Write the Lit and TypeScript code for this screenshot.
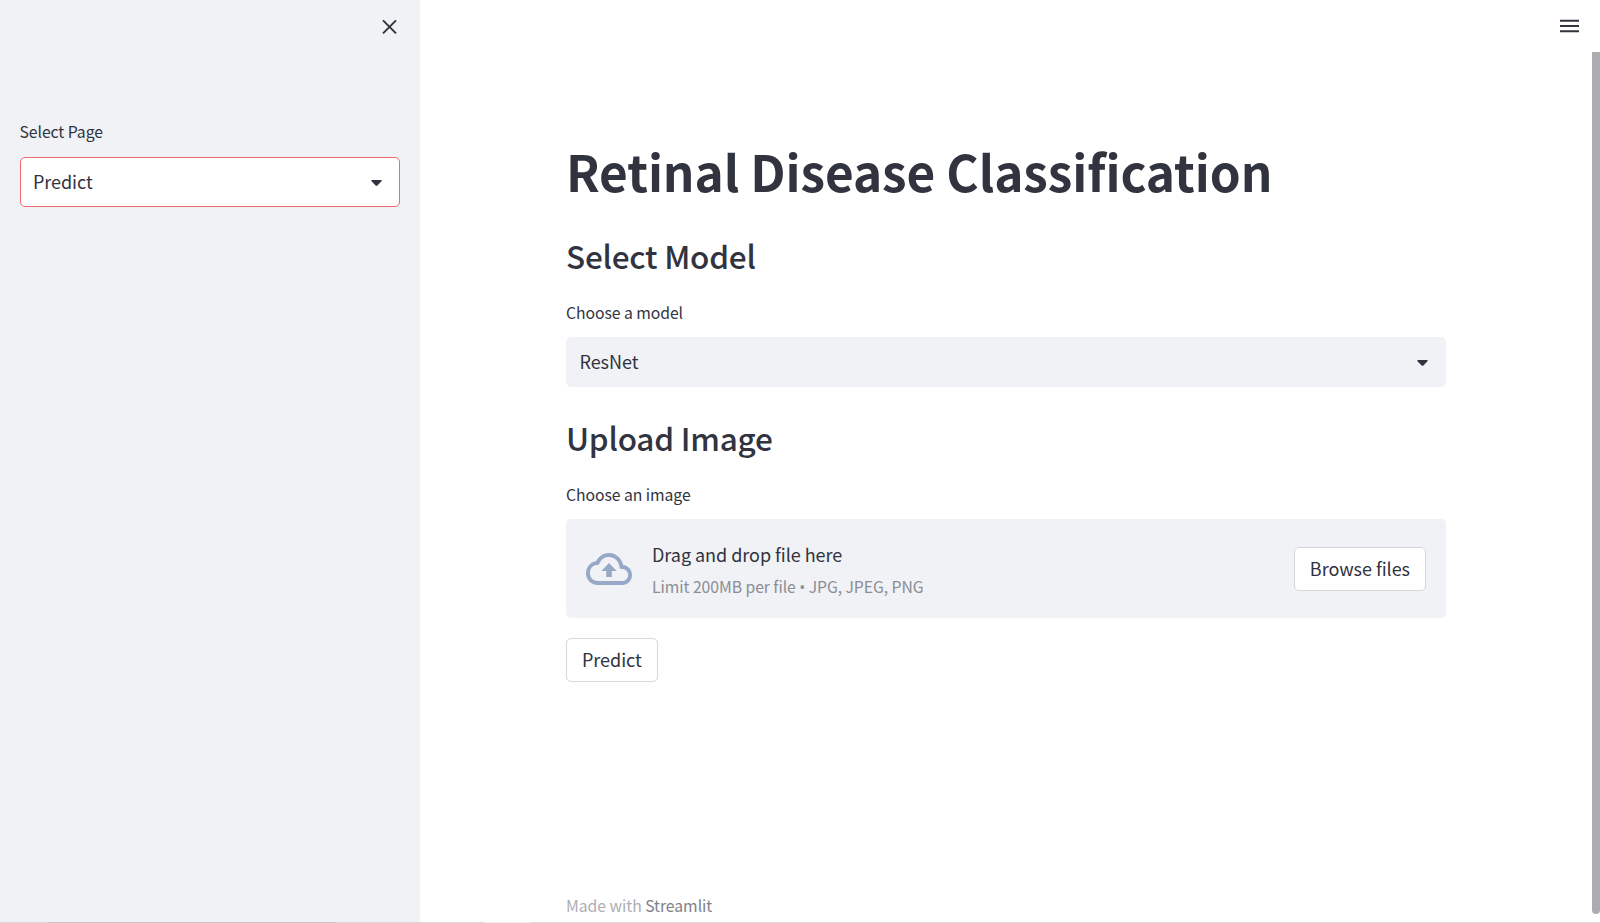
import { LitElement, html, css, svg } from "lit";
import { customElement, property } from "lit/decorators.js";

const caret = svg`<path d="M0.3 0.9 Q0 0 1.2 0 H9.8 Q11 0 10.7 0.9 L6.4 5.4 Q5.5 6.3 4.6 5.4 Z" fill="#31333f"/>`;

@customElement("select-box")
class SelectBox extends LitElement {
  @property() label = "";
  @property() value = "";
  @property({ type: Boolean, reflect: true }) focused = false;

  static styles = css`
    :host { display: block; }
    .label { font-size: 15.75px; line-height: 24px; height: 36px; white-space: nowrap; letter-spacing: -0.06px; }
    :host([focused]) .label { height: 37px; }
    .box {
      box-sizing: border-box; height: 50px; display: flex; align-items: center;
      justify-content: space-between; padding: 0 17px 0 12.5px; border-radius: 5px;
      border: 1px solid #f0f2f6; background: #f0f2f6; font-size: 18px; line-height: 28px;
    }
    :host([focused]) .box { background: #fff; border-color: #ee6a6e; }
    .value { padding-bottom: 2px; letter-spacing: -0.05px; }
    svg { display: block; margin-top: 1px; }
  `;

  render() {
    return html`
      <div class="label">${this.label}</div>
      <div class="box">
        <span class="value">${this.value}</span>
        <svg width="11" height="6" viewBox="0 0 11 6">${caret}</svg>
      </div>`;
  }
}

@customElement("app-root")
class AppRoot extends LitElement {
  static styles = css`
    :host {
      display: flex; flex-direction: column; height: 923px; overflow: hidden; background: #fff; color: #31333f;
      font-family: "Noto Sans CJK SC", "Noto Sans CJK JP", "Noto Sans", sans-serif;
    }
    svg { display: block; }
    .app { display: flex; flex: 1; min-height: 0; }
    .sidebar { box-sizing: border-box; width: 420px; background: #f0f2f6; padding: 0 20px 0 19.5px; }
    .close { height: 120px; box-sizing: border-box; padding: 19px 3px 0 0; display: flex; justify-content: flex-end; }
    .main { flex: 1; display: flex; justify-content: flex-end; }
    .column { width: 880px; margin-right: 94px; display: flex; flex-direction: column; padding-top: 138px; box-sizing: border-box; }
    h1 { margin: 0; font-size: 49.5px; line-height: 66px; font-weight: 700; white-space: nowrap; letter-spacing: -0.09px; }
    h2 { margin: 0; font-size: 31.5px; line-height: 44px; font-weight: 500; white-space: nowrap; letter-spacing: -0.22px; }
    .h-model { margin-top: 29px; margin-bottom: 24px; }
    .h-upload { margin-top: 28px; margin-bottom: 24px; }
    .label { font-size: 15.75px; line-height: 24px; height: 36px; letter-spacing: -0.06px; }
    .drop {
      box-sizing: border-box; height: 99px; border-radius: 5px; background: #f0f2f6; padding: 0 20px;
      display: flex; align-items: center;
    }
    .hint { flex: 1; padding: 1px 0 0 20px; }
    .hint-main { font-size: 18px; line-height: 29px; letter-spacing: -0.04px; }
    .hint-sub { font-size: 15.75px; line-height: 24px; color: #8b8d95; padding-top: 6px; letter-spacing: -0.06px; }
    .dot { font-family: "Open Sans", sans-serif; font-size: 16px; line-height: 1; }
    .button {
      box-sizing: border-box; height: 44px; padding: 0 15px 2px; border: 1px solid #d6d7db; border-radius: 5px;
      background: #fff; color: inherit; font: inherit; font-size: 18px; line-height: 28px; white-space: nowrap;
      letter-spacing: -0.04px;
    }
    .predict { align-self: flex-start; margin-top: 20px; }
    footer { margin-top: 212px; font-size: 15.75px; line-height: 24px; color: #adaeb3; letter-spacing: -0.05px; }
    .brand { color: #7f8188; }
    .rail { width: 94px; margin-left: -94px; display: flex; flex-direction: column; align-items: flex-end; }
    .menu { box-sizing: border-box; height: 52px; padding: 19px 21px 0 0; }
    .thumb { width: 8px; height: 862px; background: #adadb1; border-radius: 0 0 4px 4px; }
    .edge { height: 1px; display: flex; background: #d9d9db; }
    .edge-a { width: 48px; }
    .edge-b { width: 288px; background: #c4c5c8; }
    .edge-c { width: 149px; }
    .edge-d { width: 45px; background: #ededee; }
    .column { margin-right: 154px; }
  `;

  render() {
    return html`
      <div class="app">
        <aside class="sidebar">
          <div class="close">
            <svg width="15" height="16" viewBox="0 0 15 16" fill="none" stroke="#31333f" stroke-width="2">
              <path d="M1 1.4 L14 14.4 M14 1.4 L1 14.4" />
            </svg>
          </div>
          <select-box label="Select Page" value="Predict" focused></select-box>
        </aside>
        <main class="main">
          <div class="column">
            <h1>Retinal Disease Classification</h1>
            <h2 class="h-model">Select Model</h2>
            <select-box label="Choose a model" value="ResNet"></select-box>
            <h2 class="h-upload">Upload Image</h2>
            <div class="label">Choose an image</div>
            <div class="drop">
              <svg width="46" height="32" viewBox="0 4 24 16" preserveAspectRatio="none" fill="#98a8c9">
                <path d="M19.35 10.04A7.49 7.49 0 0 0 12 4C9.11 4 6.6 5.64 5.35 8.04A5.994 5.994 0 0 0 0 14c0 3.31 2.69 6 6 6h13c2.76 0 5-2.24 5-5 0-2.64-2.05-4.78-4.65-4.96zM19 18H6c-2.21 0-4-1.79-4-4 0-2.05 1.53-3.76 3.56-3.97l1.07-.11.5-.95A5.469 5.469 0 0 1 12 6c2.62 0 4.88 1.86 5.39 4.43l.3 1.5 1.53.11A2.98 2.98 0 0 1 22 15c0 1.65-1.35 3-3 3zM8 13h2.55v3h2.9v-3H16l-4-4z" />
              </svg>
              <div class="hint">
                <div class="hint-main">Drag and drop file here</div>
                <div class="hint-sub">Limit 200MB per file <span class="dot">•</span> JPG, JPEG, PNG</div>
              </div>
              <button class="button">Browse files</button>
            </div>
            <button class="button predict">Predict</button>
            <footer>Made with <span class="brand">Streamlit</span></footer>
          </div>
          <div class="rail">
            <div class="menu">
              <svg width="19" height="14" viewBox="0 0 19 14" fill="#31333f">
                <path d="M0 .7h19v2H0zM0 6h19v2H0zM0 11.3h19v2H0z" />
              </svg>
            </div>
            <div class="thumb"></div>
          </div>
        </main>
      </div>
      <div class="edge">
        <div class="edge-a"></div><div class="edge-b"></div><div class="edge-c"></div><div class="edge-d"></div>
      </div>`;
  }
}
